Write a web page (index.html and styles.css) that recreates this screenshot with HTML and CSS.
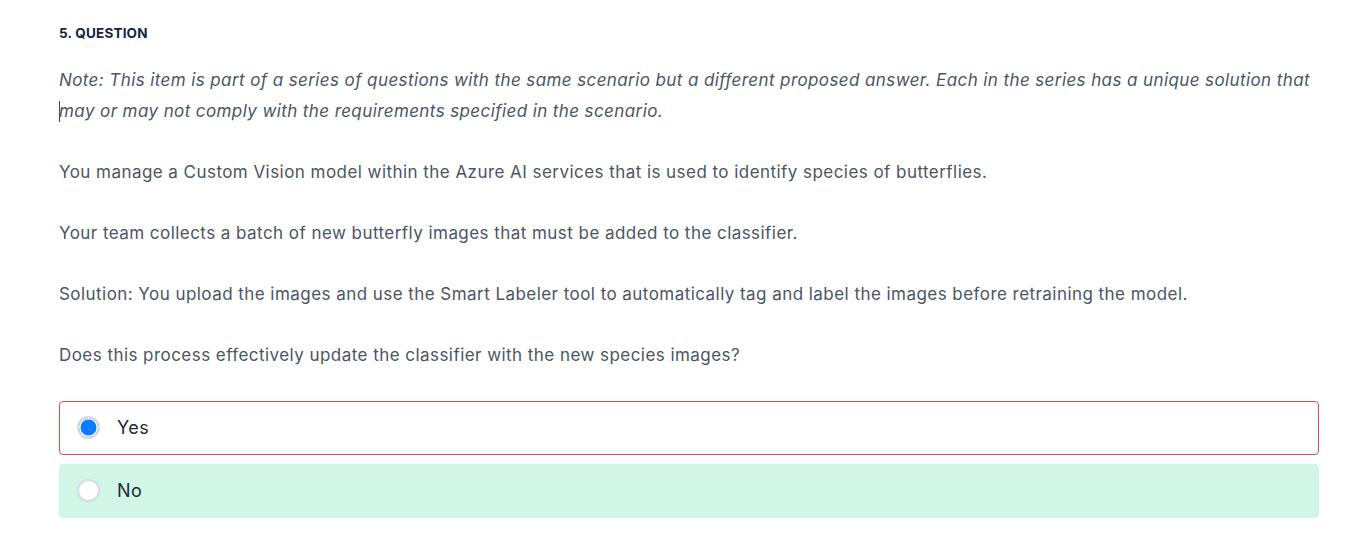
FILE: index.html
```html
<!DOCTYPE html>
<html>
<head>
<meta charset="utf-8">
<link rel="stylesheet" href="styles.css">
</head>
<body>
<div class="page">
  <div class="title">5. QUESTION</div>
  <p class="note">Note: This item is part of a series of questions with the same scenario but a different proposed answer. Each in the series has a unique solution that <span class="nw"><span class="caret"></span>may</span> or may not comply with the requirements specified in the scenario.</p>
  <p>You manage a Custom Vision model within the Azure AI services that is used to identify species of butterflies.</p>
  <p>Your team collects a batch of new butterfly images that must be added to the classifier.</p>
  <p>Solution: You upload the images and use the Smart Labeler tool to automatically tag and label the images before retraining the model.</p>
  <p>Does this process effectively update the classifier with the new species images?</p>
  <div class="options">
    <label class="option wrong"><span class="radio checked"></span><span class="label">Yes</span></label>
    <label class="option correct"><span class="radio"></span><span class="label">No</span></label>
  </div>
</div>
</body>
</html>
```
FILE: styles.css
```css
html, body { margin: 0; padding: 0; background: #fff; }
body { font-family: Inter, "Noto Sans", sans-serif; color: #4b5563; }
.page { width: 1260px; padding: 23px 0 0 59px; }
.title { font-size: 13.5px; line-height: 20px; font-weight: 700; color: #14253f; margin-bottom: 22px; letter-spacing: 0.2px; }
p { font-size: 17px; line-height: 30.5px; margin: 0 0 30.5px; letter-spacing: 0.45px; }
.note { font-style: italic; letter-spacing: 0.4px; }
.nw { white-space: nowrap; }
.caret { display: inline-block; width: 1px; height: 21px; background: #3b4656; vertical-align: -5px; margin-right: -1px; }
.options { display: flex; flex-direction: column; gap: 9px; }
.option { display: flex; align-items: center; height: 54px; box-sizing: border-box; border: 1px solid transparent; border-radius: 4px; padding-left: 17px; }
.option.wrong { border-color: #e5484d; background: #fff; }
.option.correct { background: #d1f5e6; border-color: #d1f5e6; }
.radio { width: 23px; height: 23px; box-sizing: border-box; border-radius: 50%; border: 2px solid #d6dbe5; background: #fff; flex: none; }
.radio.checked { background: #0a7cff; box-shadow: inset 0 0 0 1.5px #fff; }
.label { margin-left: 17px; font-size: 18px; letter-spacing: 0.4px; color: #1f2937; }
```
